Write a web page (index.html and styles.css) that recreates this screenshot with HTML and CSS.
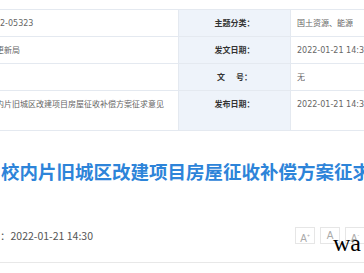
FILE: index.html
```html
<!DOCTYPE html>
<html lang="zh-CN">
<head>
    <meta charset="UTF-8">
    <title>征求意见</title>
    <link rel="stylesheet" href="styles.css">
</head>
<body>
    <div class="meta">
        <div class="row">
            <div class="val left">2-05323</div>
            <div class="lab">主题分类：</div>
            <div class="val">国土资源、能源</div>
        </div>
        <div class="row">
            <div class="val left"><span class="clip">更</span>新局</div>
            <div class="lab">发文日期：</div>
            <div class="val">2022-01-21 14:30</div>
        </div>
        <div class="row">
            <div class="val left"></div>
            <div class="lab">文&emsp;&nbsp;号：</div>
            <div class="val">无</div>
        </div>
        <div class="row tall">
            <div class="val left"><span class="clip">内</span>片旧城区改建项目房屋征收补偿方案征求意见</div>
            <div class="lab">发布日期：</div>
            <div class="val">2022-01-21 14:30</div>
        </div>
    </div>

    <h1 class="title">校内片旧城区改建项目房屋征收补偿方案征求意见</h1>

    <div class="info">
        <div class="date"><span class="hide">发布时间</span>：2022-01-21 14:30</div>
        <div class="sizes">
            <span class="btn">A<sup>+</sup></span>
            <span class="btn">A</span>
            <span class="btn">A<sup>-</sup></span>
        </div>
        <span class="stray">wa</span>
    </div>
</body>
</html>
```

FILE: styles.css
```css
html,body{
    margin: 0;
    padding: 0;
    background: #fff;
    overflow: hidden;
}
body{
    width: 364px;
    font-family: "Noto Sans CJK SC", "Noto Sans", sans-serif;
    position: relative;
}

/* 信息表 */
.meta{
    margin-top: 9px;
    border-top: 1px solid #e4e9f0;
    width: 560px;
}
.row{
    display: flex;
    height: 26px;
    border-bottom: 1px solid #e4e9f0;
    font-family: "DejaVu Sans", "Noto Sans CJK SC", sans-serif;
    font-size: 8px;
    line-height: 13px;
}
.row.tall{
    height: 39px;
}
.row>div{
    padding-top: 7px;
    white-space: nowrap;
    overflow: hidden;
}
.left{
    width: 178px;
    border-right: 1px solid #e4e9f0;
}
.lab{
    width: 111px;
    background: #eef3fa;
    border-right: 1px solid #e4e9f0;
    text-align: center;
    color: #333;
    font-weight: bold;
}
.val{
    color: #666;
    padding-left: 6px;
}
.val.left{
    padding-left: 0;
}
.clip{
    display: inline-block;
    margin-left: -4px;
}

/* 标题 */
.title{
    margin: 27px 0 0 1px;
    font-size: 18.5px;
    line-height: 26px;
    font-weight: bold;
    color: #2d84d9;
    white-space: nowrap;
    overflow: hidden;
}

.info{
    display: flex;
    justify-content: space-between;
    align-items: center;
    margin-top: 43px;
    padding-bottom: 18px;
    border-bottom: 1px solid #e8e8e8;
    height: 17px;
}
.date{
    font-size: 10.5px;
    color: #555;
    white-space: nowrap;
}
.hide{
    display: inline-block;
    margin-left: -42px;
}
.sizes{
    display: flex;
    gap: 5px;
    margin-right: -1px;
}
.btn{
    width: 18px;
    height: 15px;
    border: 1px solid #e6e6e6;
    color: #aaa;
    font-size: 10px;
    line-height: 15px;
    text-align: center;
    font-family: "Liberation Sans", sans-serif;
}
.btn sup{
    font-size: 5px;
    vertical-align: 5px;
}
.stray{
    position: absolute;
    left: 333px;
    top: 229px;
    font-family: "Liberation Serif", serif;
    font-size: 24px;
    line-height: 28px;
    color: #000;
}
```
